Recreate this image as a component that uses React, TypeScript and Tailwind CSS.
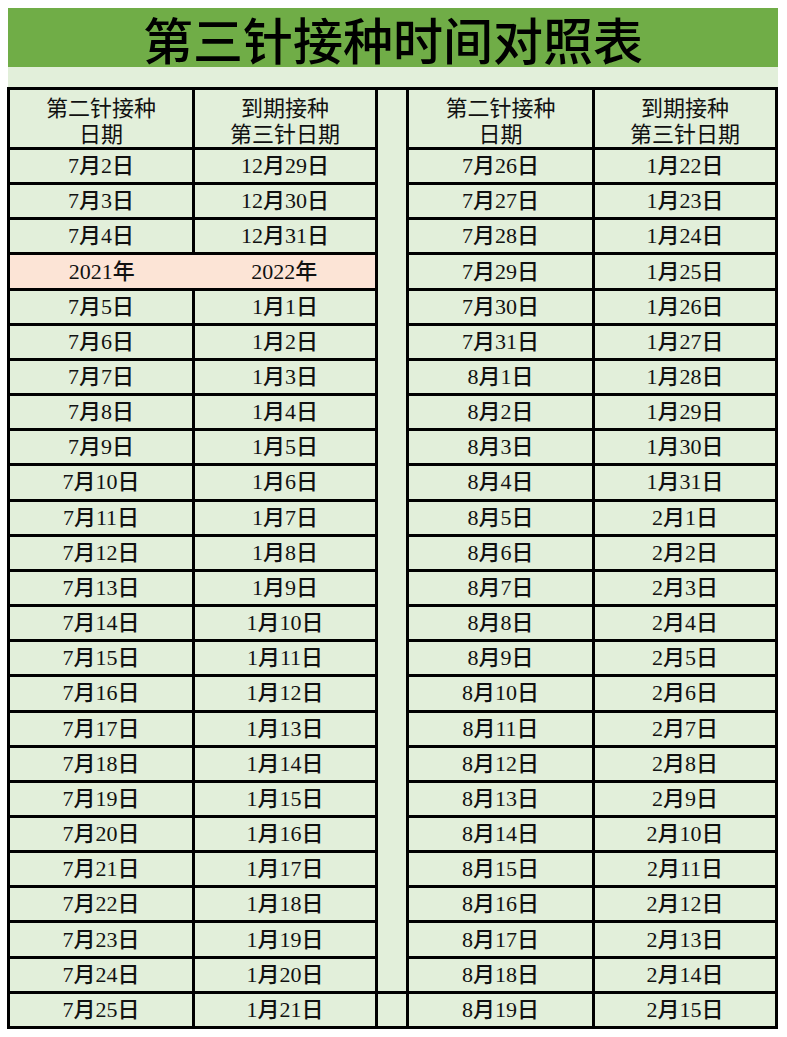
import React from "react";

type Row = { a: string; b: string; c: string; d: string; year?: boolean };

function buildRows(): Row[] {
  const left: [string, string, boolean?][] = [];
  for (let d = 2; d <= 4; d++) left.push([`7月${d}日`, `12月${d + 27}日`]);
  left.push(["2021年", "2022年", true]);
  for (let d = 5; d <= 25; d++) left.push([`7月${d}日`, `1月${d - 4}日`]);

  const right: [string, string][] = [];
  for (let d = 26; d <= 31; d++) right.push([`7月${d}日`, `1月${d - 4}日`]);
  for (let d = 1; d <= 19; d++) {
    const third = d + 27 <= 31 ? `1月${d + 27}日` : `2月${d - 4}日`;
    right.push([`8月${d}日`, third]);
  }

  return left.map((l, i) => ({
    a: l[0],
    b: l[1],
    c: right[i][0],
    d: right[i][1],
    year: l[2],
  }));
}

const rows = buildRows();

const cell = "border-[3px] border-black text-center align-middle p-0 overflow-hidden whitespace-nowrap";
const head = `${cell} font-normal bg-[#e2efda]`;

export default function App() {
  return (
    <div className="w-[787px] h-[1037px] bg-white pt-2 pl-2">
      <div className="w-[770px] bg-[#e2efda]">
        <div
          className="h-[59px] bg-[#70ad47] flex items-center justify-center text-[50px] font-medium text-black leading-none"
          style={{ fontFamily: '"Noto Sans CJK SC", sans-serif' }}
        >
          第三针接种时间对照表
        </div>
        <div className="h-[20px]" />
        <table
          className="border-collapse table-fixed w-[771px] -ml-px"
          style={{ fontFamily: '"Liberation Serif", "Noto Sans CJK SC", serif' }}
        >
          <colgroup>
            <col className="w-[185px]" />
            <col className="w-[183px]" />
            <col className="w-[31px]" />
            <col className="w-[186px]" />
            <col className="w-[183px]" />
          </colgroup>
          <tbody className="text-[22px] font-medium text-[#111]">
            <tr
              className="h-[60px] text-[22px] leading-[26px] text-[#111]"
              style={{ fontFamily: '"Noto Sans CJK SC", sans-serif' }}
            >
              <td className={head}>
                第二针接种
                <br />
                日期
              </td>
              <td className={head}>
                到期接种
                <br />
                第三针日期
              </td>
              <td rowSpan={25} className={`${cell} bg-[#e2efda]`} />
              <td className={head}>
                第二针接种
                <br />
                日期
              </td>
              <td className={head}>
                到期接种
                <br />
                第三针日期
              </td>
            </tr>
            {rows.map((r, i) => (
              <tr key={i} className="h-[35.16px] leading-none">
                {r.year ? (
                  <>
                    <td className={`${cell} border-r-0 bg-[#fce4d6]`}>{r.a}</td>
                    <td className={`${cell} border-l-0 bg-[#fce4d6]`}>{r.b}</td>
                  </>
                ) : (
                  <>
                    <td className={`${cell} bg-[#e2efda]`}>{r.a}</td>
                    <td className={`${cell} bg-[#e2efda]`}>{r.b}</td>
                  </>
                )}
                {i === rows.length - 1 && <td className={`${cell} bg-[#e2efda]`} />}
                <td className={`${cell} bg-[#e2efda]`}>{r.c}</td>
                <td className={`${cell} bg-[#e2efda]`}>{r.d}</td>
              </tr>
            ))}
          </tbody>
        </table>
      </div>
    </div>
  );
}
